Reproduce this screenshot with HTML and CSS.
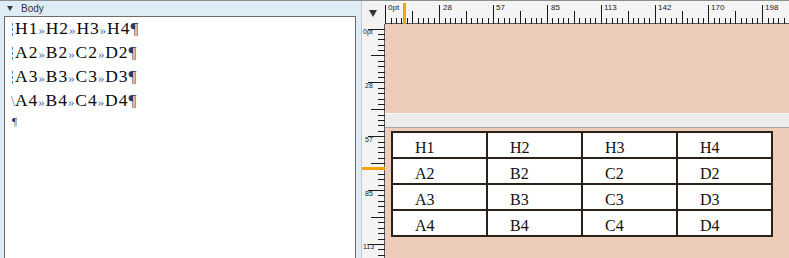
FILE: index.html
```html
<!DOCTYPE html>
<html lang="en">

<head>
    <meta charset="UTF-8">
    <meta name="viewport" content="width=device-width, initial-scale=1.0">
    <title>Story Editor</title>
    <link rel="stylesheet" href="styles.css">
</head>

<body>
    <div class="app">
        <!-- 文本编辑区 -->
        <section class="story">
            <div class="story-head"><span class="tri"></span><span>Body</span></div>
            <div class="editor">
                <p class="line"><i class="mark"></i>H1<b>»</b>H2<b>»</b>H3<b>»</b>H4<em>¶</em></p>
                <p class="line"><i class="mark"></i>A2<b>»</b>B2<b>»</b>C2<b>»</b>D2<em>¶</em></p>
                <p class="line"><i class="mark"></i>A3<b>»</b>B3<b>»</b>C3<b>»</b>D3<em>¶</em></p>
                <p class="line"><i class="slash">\</i>A4<b>»</b>B4<b>»</b>C4<b>»</b>D4<em>¶</em></p>
                <p class="line last"><em>¶</em></p>
            </div>
        </section>
        <!-- 版面区 -->
        <section class="layout">
            <div class="corner"><span class="tri-lg"></span></div>
            <div class="ruler-h">
                <svg id="rh" width="403" height="23">
                    <rect x="18" y="2" width="3" height="21" fill="#f7a400"></rect>
                    <text x="3" y="9">0pt</text>
                    <text x="58" y="9">28</text>
                    <text x="111" y="9">57</text>
                    <text x="166" y="9">85</text>
                    <text x="219" y="9">113</text>
                    <text x="273" y="9">142</text>
                    <text x="326" y="9">170</text>
                    <text x="380" y="9">198</text>
                </svg>
            </div>
            <div class="ruler-v">
                <svg id="rv" width="23" height="233">
                    <rect x="0" y="143" width="23" height="3" fill="#f7a400"></rect>
                    <text x="1" y="10">0pt</text>
                    <text x="3" y="64">28</text>
                    <text x="3" y="118">57</text>
                    <text x="3" y="172">85</text>
                    <text x="1" y="225">113</text>
                </svg>
            </div>
            <div class="canvas">
                <div class="page-top"></div>
                <div class="gap"></div>
                <div class="page">
                    <table>
                        <tr><td>H1</td><td>H2</td><td>H3</td><td>H4</td></tr>
                        <tr><td>A2</td><td>B2</td><td>C2</td><td>D2</td></tr>
                        <tr><td>A3</td><td>B3</td><td>C3</td><td>D3</td></tr>
                        <tr><td>A4</td><td>B4</td><td>C4</td><td>D4</td></tr>
                    </table>
                </div>
            </div>
        </section>
    </div>
    <script>
        // 标尺刻度
        var ns = 'http://www.w3.org/2000/svg'
        function tick(svg, x1, y1, x2, y2) {
            var l = document.createElementNS(ns, 'line')
            l.setAttribute('x1', x1)
            l.setAttribute('y1', y1)
            l.setAttribute('x2', x2)
            l.setAttribute('y2', y2)
            svg.insertBefore(l, svg.firstChild)
        }
        var rh = document.getElementById('rh')
        for (var i = 0; i < 75; i++) {
            var x = Math.round(0.3 + i * 5.386) + 0.5
            var y = i % 10 === 0 ? 4 : (i % 5 === 0 ? 10 : 17)
            tick(rh, x, y, x, 23)
        }
        var rv = document.getElementById('rv')
        for (var j = 0; j < 44; j++) {
            var yy = Math.round(4.5 + j * 5.386) + 0.5
            var xx = j % 10 === 0 ? 6 : (j % 5 === 0 ? 9 : 16)
            tick(rv, xx, yy, 23, yy)
        }
    </script>
</body>

</html>
```

FILE: styles.css
```css
body {
    margin: 0;
    width: 789px;
    height: 258px;
    overflow: hidden;
    border-top: 1px solid #8e8e8e;
    font-family: "Liberation Sans", Arial, sans-serif;
}

.app {
    display: flex;
    height: 257px;
}

.story {
    width: 361px;
    background-color: #deedf5;
    display: flex;
    flex-direction: column;
}

.story-head {
    height: 15px;
    display: flex;
    align-items: center;
    gap: 8px;
    padding-left: 7px;
    font-size: 10px;
    color: #333;
}

.story-head .tri {
    width: 0;
    height: 0;
    border-left: 3px solid transparent;
    border-right: 3px solid transparent;
    border-top: 5px solid #3a3a3a;
}

.editor {
    flex: 1;
    margin: 0 5px 0 4px;
    background-color: #fff;
    border: 1px solid #6c6c6c;
    border-bottom: none;
    font-family: "Liberation Serif", "Times New Roman", serif;
    color: #0a0a0a;
}

.editor .line {
    margin: 0;
    padding-left: 7px;
    font-size: 17.5px;
    line-height: 23px;
    letter-spacing: 1px;
    white-space: nowrap;
}

.editor .line.last {
    line-height: 12px;
}

.line .mark {
    display: inline-block;
    width: 0;
    height: 13px;
    border-left: 1px dashed #3d8fd8;
    margin-right: 2px;
    vertical-align: -2px;
}

.line .slash {
    font-style: normal;
    font-size: 14px;
    color: #6b7684;
    margin-left: -1px;
    letter-spacing: 0;
}

.line b {
    font-weight: normal;
    font-size: 13px;
    color: #3b6fbe;
    letter-spacing: 0.8px;
}

.line em {
    font-style: normal;
    color: #223c6c;
}

.line.last em {
    font-size: 11px;
}

.layout {
    flex: 1;
    border-left: 1px solid #c8c8c8;
    display: grid;
    grid-template-columns: 23px 1fr;
    grid-template-rows: 23px 1fr;
}

.corner {
    background-color: #f2f2f2;
    border-right: 1px solid #f2f2f2;
    border-bottom: 1px solid #f2f2f2;
    display: flex;
    align-items: center;
    justify-content: center;
}

.corner .tri-lg {
    width: 0;
    height: 0;
    margin: 3px 1px 0 0;
    border-left: 4px solid transparent;
    border-right: 4px solid transparent;
    border-top: 7px solid #333;
}

.ruler-h {
    background-color: #f4f4f4;
    border-bottom: 1px solid #5a5a5a;
}

.ruler-v {
    background-color: #f4f4f4;
    border-right: 1px solid #5a5a5a;
}

.ruler-h svg,
.ruler-v svg {
    display: block;
}

svg line {
    stroke: #1a1a1a;
    stroke-width: 1;
    shape-rendering: crispEdges;
}

svg text {
    font-family: "Liberation Sans", Arial, sans-serif;
    font-size: 8px;
    fill: #222;
}

#rv text {
    font-size: 7px;
}

.canvas {
    background-color: #edcdba;
    overflow: hidden;
}

.page-top {
    height: 89px;
}

.gap {
    height: 13px;
    background-color: #ececec;
    border-top: 1px solid #fafafa;
    border-bottom: 1px solid #a3a3a3;
}

.page {
    padding: 3px 0 0 6px;
}

.page table {
    width: 382px;
    table-layout: fixed;
    border-collapse: collapse;
    background-color: #fff;
    font-family: "Liberation Serif", "Times New Roman", serif;
    font-size: 16px;
    color: #111;
}

.page td {
    height: 24px;
    padding: 0 0 0 22px;
    border: 2px solid #2b2119;
    vertical-align: bottom;
    line-height: 18px;
}
```
